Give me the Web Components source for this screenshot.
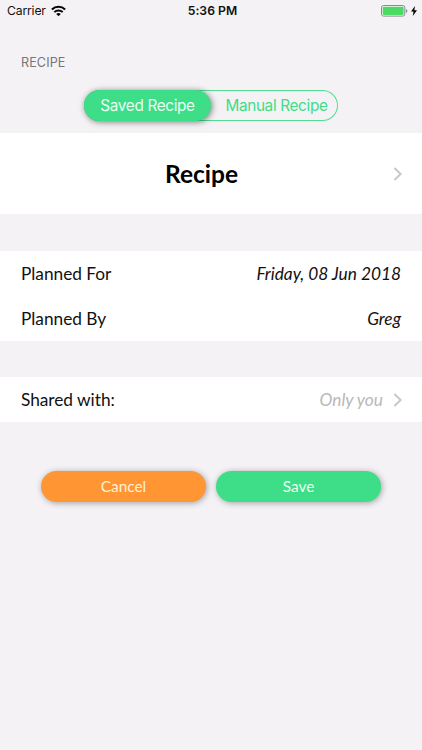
<!DOCTYPE html>
<html lang="en">
<head>
<meta charset="utf-8">
<title>Plan a recipe</title>
<style>
html,body{margin:0;padding:0;background:#f4f2f5}
body{width:422px;height:750px;overflow:hidden}
</style>
</head>
<body>
<plan-screen></plan-screen>
<script>
function define(name, html) {
  const template = document.createElement('template');
  template.innerHTML = html;
  customElements.define(name, class extends HTMLElement {
    constructor() {
      super();
      this.attachShadow({ mode: 'open' }).append(template.content.cloneNode(true));
    }
  });
}

define('status-bar', `
<style>
:host{display:grid;grid-template-columns:1fr auto 1fr;align-items:center;height:22px;padding:0 5px 0 7px;box-sizing:border-box;font:400 12.2px/22px Inter,sans-serif;color:#111}
.left,.right{display:flex;align-items:center}
.left{gap:5px}
.right{justify-content:flex-end;gap:3px}
.carrier{letter-spacing:-.17px}
.time{font-weight:600;letter-spacing:.05px;padding-left:1px}
svg{display:block}
</style>
<div class="left"><span class="carrier">Carrier</span>
<svg width="15" height="12" viewBox="0 0 15 12" fill="none" stroke="#050505"><path d="M.9 4.4a9.4 9.4 0 0 1 13.2 0" stroke-width="2.1"/><path d="M3.3 7.1a6 6 0 0 1 8.4 0" stroke-width="2"/><path d="M7.5 11.3 5.2 9a3.3 3.3 0 0 1 4.6 0z" fill="#050505" stroke="none"/></svg></div>
<span class="time">5:36 PM</span>
<div class="right">
<svg width="27" height="12" viewBox="0 0 27 12"><rect x=".5" y=".5" width="23.3" height="10.6" rx="2" fill="#fafafa" stroke="#8b8b8d"/><rect x="1.7" y="1.7" width="20.9" height="8.2" rx=".8" fill="#4cd964"/><path d="M24.9 4v3.8q1.5-.5 1.5-1.9T24.9 4z" fill="#8b8b8d"/></svg>
<svg width="6" height="10" viewBox="0 0 6 10"><path d="M4 0 0 5.5h2.5L1.8 10 6 4.2H3.4z" fill="#050505"/></svg>
</div>`);

define('segment-item', `
<style>
:host{display:flex;align-items:center;justify-content:center;height:31px;box-sizing:border-box;font:400 15.3px/31px Inter,sans-serif;letter-spacing:-.33px;color:#3dde87;white-space:nowrap}
:host([selected]){background:#3dde87;color:#e9fff2;border-radius:16px;box-shadow:1px 1px 6px rgba(0,0,0,.5)}
</style><slot></slot>`);

define('segmented-control', `
<style>
:host{display:grid;grid-template-columns:127px 127px;width:254px;height:31px;border-radius:16px;box-shadow:inset 0 0 0 1px #55dc94}
</style><slot></slot>`);

define('chevron-icon', `
<style>:host{display:block;width:9px;height:14px}svg{display:block}</style>
<svg width="9" height="14" viewBox="0 0 9 14" fill="none" stroke="#c5c5ca" stroke-width="1.9"><path d="M1.4 1 7.7 7l-6.3 6"/></svg>`);

define('list-group', `
<style>:host{display:block;background:#fff}</style><slot></slot>`);

define('list-row', `
<style>
:host{display:flex;align-items:center;height:45px;padding:0 21px;font:400 17.3px/45px Lato,sans-serif;color:#111;box-sizing:border-box}
:host([muted]){padding-right:20px}
.label{flex:1;letter-spacing:-.03px}
.value{font-style:italic}
:host([muted]) .value{color:#b8b8ba}
::slotted(chevron-icon){margin-left:10px}
</style><span class="label"><slot name="label"></slot></span><span class="value"><slot></slot></span><slot name="accessory"></slot>`);

define('recipe-row', `
<style>
:host{display:grid;grid-template-columns:1fr auto 1fr;align-items:center;height:81px;padding:0 20px 0 1px;box-sizing:border-box;font:700 24.5px/82px Lato,sans-serif;color:#000}
.t{grid-column:2}
::slotted(chevron-icon){justify-self:end}
</style><span class="t"><slot></slot></span><slot name="accessory"></slot>`);

define('pill-button', `
<style>
:host{display:block;flex:1;height:31px;border-radius:16px;background:var(--fill);color:var(--ink);text-align:center;font:400 15.4px/31px Lato,sans-serif;box-shadow:1px 1px 6px rgba(0,0,0,.35)}
</style><slot></slot>`);

define('plan-screen', `
<style>
:host{display:flex;flex-direction:column;width:422px;height:750px;background:#f4f2f5}
.heading{margin:33px 0 0 21px;font:400 12.6px/16px Inter,sans-serif;letter-spacing:.1px;color:#77777b}
segmented-control{margin:19px 0 12px 84px}
.details{margin:37px 0 36px}
.actions{display:flex;gap:10px;margin:49px 41px 0}
</style>
<status-bar></status-bar>
<div class="heading">RECIPE</div>
<segmented-control><segment-item selected>Saved Recipe</segment-item><segment-item style="padding-left:4px">Manual Recipe</segment-item></segmented-control>
<list-group><recipe-row>Recipe<chevron-icon slot="accessory"></chevron-icon></recipe-row></list-group>
<list-group class="details">
<list-row><span slot="label">Planned For</span>Friday, 08 Jun 2018</list-row>
<list-row><span slot="label">Planned By</span>Greg</list-row>
</list-group>
<list-group><list-row muted><span slot="label">Shared with:</span>Only you<chevron-icon slot="accessory"></chevron-icon></list-row></list-group>
<div class="actions"><pill-button style="--fill:#ff9633;--ink:#fff0d8">Cancel</pill-button><pill-button style="--fill:#3dde87;--ink:#e9fff2">Save</pill-button></div>`);
</script>
</body>
</html>
